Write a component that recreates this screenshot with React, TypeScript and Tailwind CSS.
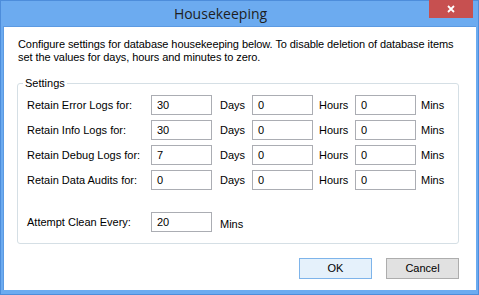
import React from "react";

const FONT = { fontFamily: '"Liberation Sans", Arial, sans-serif' };

type Row = { label: string; days: string; hours: string; mins: string };

const ROWS: Row[] = [
  { label: "Retain Error Logs for:", days: "30", hours: "0", mins: "0" },
  { label: "Retain Info Logs for:", days: "30", hours: "0", mins: "0" },
  { label: "Retain Debug Logs for:", days: "7", hours: "0", mins: "0" },
  { label: "Retain Data Audits for:", days: "0", hours: "0", mins: "0" },
];

function Field({ value }: { value: string }) {
  return (
    <div className="flex h-[20px] w-[61px] shrink-0 items-center border border-[#abadb3] bg-white px-[5px] text-[11px] leading-none text-black">
      {value}
    </div>
  );
}

function Button({ label, primary = false }: { label: string; primary?: boolean }) {
  return (
    <button
      type="button"
      className={`flex h-[21px] w-[73px] items-center justify-center border text-[11px] text-black ${
        primary ? "border-[#7eb4ea] bg-[#e5f1fb]" : "border-[#adadad] bg-[#e1e1e1]"
      }`}
    >
      {label}
    </button>
  );
}

export default function App() {
  return (
    <div
      className="relative flex h-[295px] w-[479px] flex-col border border-[#4d8ddb] bg-[#6cabf0]"
      style={FONT}
    >
      {/* title bar */}
      <div className="flex h-[25px] items-center justify-center pr-[38px]">
        <span
          className="text-[14px] text-[#1e1e1e]"
          style={{ fontFamily: '"Open Sans", "Noto Sans", sans-serif' }}
        >
          Housekeeping
        </span>
      </div>
      <div className="absolute right-[5px] top-[-1px] flex h-[18px] w-[44px] items-center justify-center bg-[#c75050]">
        <svg width="8" height="8" viewBox="0 0 8 8">
          <path d="M1 1 L7 7 M7 1 L1 7" stroke="#fff" strokeWidth="1.8" />
        </svg>
      </div>

      {/* client area */}
      <div className="mx-[2px] mb-[4px] flex flex-1 flex-col border-t border-l border-[#5c9ae2] bg-white">
        <p className="ml-[14px] mt-[11px] text-[11px] leading-[13px] tracking-[-0.08px] text-black">
          Configure settings for database housekeeping below. To disable deletion of database items
          <br />
          set the values for days, hours and minutes to zero.
        </p>

        <fieldset className="ml-[13px] mt-[13px] h-[167px] w-[442px] rounded-[3px] border border-[#d5dfe5]">
          <legend className="ml-[5px] px-[2px] text-[11px] leading-[13px] text-black">
            Settings
          </legend>
          <div className="mt-[5px] flex flex-col gap-[5px] pl-[9px]">
            {ROWS.map((r) => (
              <div key={r.label} className="flex items-center text-[11px] text-black">
                <span className="w-[124px] shrink-0">{r.label}</span>
                <Field value={r.days} />
                <span className="w-[40px] shrink-0 pl-[8px]">Days</span>
                <Field value={r.hours} />
                <span className="w-[42px] shrink-0 pl-[6px]">Hours</span>
                <Field value={r.mins} />
                <span className="pl-[5px]">Mins</span>
              </div>
            ))}
          </div>
          <div className="mt-[22px] flex items-center pl-[9px] text-[11px] text-black">
            <span className="w-[124px] shrink-0">Attempt Clean Every:</span>
            <Field value="20" />
            <span className="pl-[8px] pt-[4px]">Mins</span>
          </div>
        </fieldset>

        <div className="ml-[295px] mt-[14px] flex gap-[14px]">
          <Button label="OK" primary />
          <Button label="Cancel" />
        </div>
      </div>
    </div>
  );
}
